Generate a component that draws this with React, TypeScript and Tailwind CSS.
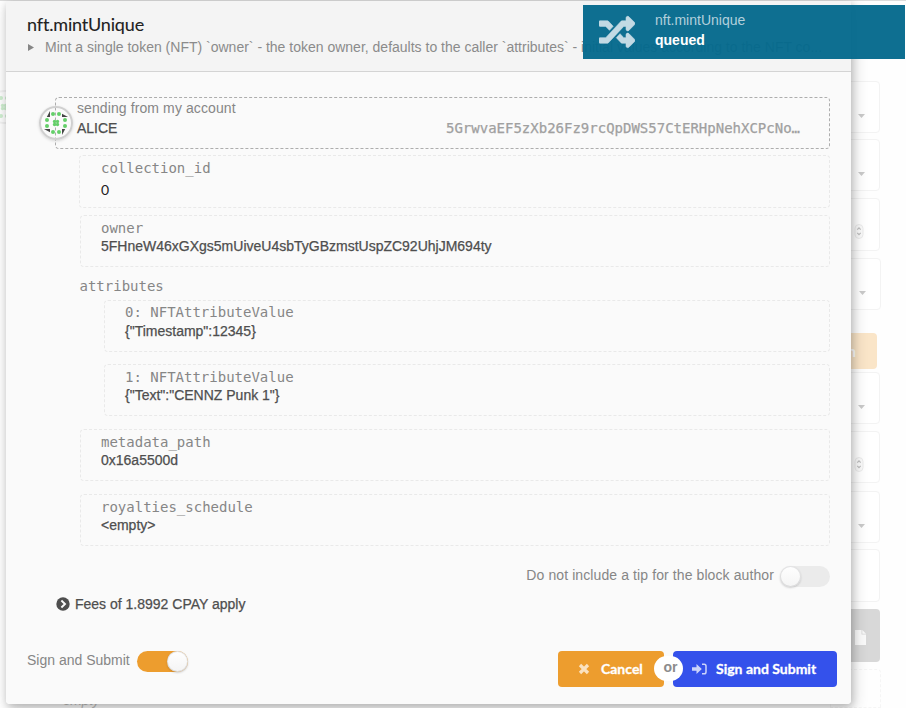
import React from 'react';

const sans = "font-['Liberation_Sans',Arial,sans-serif]";
const mono = "font-['DejaVu_Sans_Mono',monospace]";

function Param({ label, value, box, valueClass }: { label: string; value: string; box: string; valueClass: string }) {
  return (
    <div className={`rounded-[4px] border border-dashed border-[#e9e9e9] pl-[20px] ${box}`}>
      <div className={`h-[18px] text-[14px] leading-[18px] whitespace-pre text-[#868686] ${mono}`}>{label}</div>
      <div className={`h-[18px] w-max text-[14px] leading-[18px] whitespace-pre [-webkit-text-stroke:0.25px_#4e4e4e] text-[#4e4e4e] ${valueClass}`}>{value}</div>
    </div>
  );
}

function Field({ size, kind }: { size: string; kind: 'select' | 'stepper' | 'empty' }) {
  return (
    <div className={`rounded-[4px] border border-[#f3f3f3] bg-white flex justify-end ${size}`}>
      {kind === 'select' && (
        <svg className="mt-[32px] mr-[14px] h-[4px] w-[7px]" viewBox="0 0 7 4"><path d="M0 0h7L3.5 4z" fill="#cacaca" /></svg>
      )}
      {kind === 'stepper' && (
        <svg className="mt-[24px] mr-[15px] h-[16px] w-[10px]" viewBox="0 0 10 16">
          <rect x="1" y="1.5" width="8" height="14" rx="4" fill="#fafafa" stroke="#ececec" />
          <path d="M3.3 6.7L5 4.8l1.7 1.9M3.3 9.8L5 11.7l1.7-1.9" fill="none" stroke="#bdbdbd" strokeWidth="1.1" />
        </svg>
      )}
    </div>
  );
}

function Identicon() {
  const dots = [[-3, -9], [3, -9], [9, -3], [9, 3], [3, 9], [-3, 9], [-9, 3], [-9, -3], [-1.5, -1.5], [1.5, -1.5], [1.5, 1.5], [-1.5, 1.5]];
  return (
    <svg className="h-full w-full" viewBox="-15 -15 30 30">
      {[0, 90, 180, 270].map((a) => (
        <path key={a} d="M-6 -12v6h-3.2z" fill="#454545" transform={`rotate(${a})`} />
      ))}
      {dots.map(([x, y], i) => (
        <circle key={i} cx={x} cy={y} r={i > 7 ? 1.65 : 2} fill="#64cf69" />
      ))}
    </svg>
  );
}

function BackgroundPage() {
  return (
    <div className="flex h-full justify-between border-t border-[#dcdcdc] bg-[#fefefe]">
      <div className="flex w-[6px] flex-col overflow-hidden pt-[89px]">
        <div className="ml-[-13px] h-[34px] w-[34px] shrink-0 rounded-full border-2 border-[#d8d8d8] opacity-30"><Identicon /></div>
      </div>
      <div className={`mt-[691px] mr-auto ml-[49px] h-[16px] overflow-hidden text-[14px] leading-[16px] tracking-[-0.3px] text-[#c2c2c2] italic ${sans}`}>&lt;empty&gt;</div>
      <div className="flex w-[76px] flex-col pt-[80px]">
        <Field kind="select" size="h-[52px] w-[50px]" />
        <Field kind="select" size="mt-[6px] h-[52px] w-[50px]" />
        <Field kind="stepper" size="mt-[7px] h-[53px] w-[50px]" />
        <Field kind="select" size="mt-[7px] h-[52px] w-[51px]" />
        <div className="mt-[23px] h-[36px] w-[47px] rounded-[4px] bg-[#fae5c8] pl-[17px] font-[Lato,sans-serif] text-[16px] leading-[36px] font-bold text-white">n</div>
        <Field kind="select" size="mt-[3px] h-[52px] w-[50px]" />
        <Field kind="stepper" size="mt-[7px] h-[53px] w-[50px]" />
        <Field kind="select" size="mt-[8px] h-[52px] w-[50px]" />
        <Field kind="empty" size="mt-[6px] h-[53px] w-[50px]" />
        <div className="mt-[7px] flex h-[53px] w-[50px] items-center justify-end rounded-[4px] bg-[#d8d8d8] pr-[14px]">
          <svg className="mt-[3px] h-[15px] w-[11px]" viewBox="0 0 11 15"><path d="M0 0h6.5v4.5H11V15H0z" fill="#fafafa" /><path d="M7.3 0L11 3.7H7.3z" fill="#fafafa" /></svg>
        </div>
        <div className="mt-[7px] h-[39px] w-[51px] rounded-t-[4px] border border-dashed border-[#f5f5f5]" />
      </div>
    </div>
  );
}

function Dialog() {
  return (
    <div className="absolute top-[1px] left-[6px] flex h-[703px] w-[845px] flex-col overflow-hidden rounded-b-[4px] bg-[#fafafa]">
      <header className="h-[71px] shrink-0 border-b border-[#d4d4d4] bg-[#f4f4f4] pl-[21px]">
        <h1 className="mt-[12px] h-[23px] w-max font-[Lato,sans-serif] text-[18px] leading-[23px] tracking-[-0.16px] [-webkit-text-stroke:0.1px_#212121] text-[#212121]">nft.mintUnique</h1>
        <div className="flex h-[22px] items-center">
          <svg className="ml-px h-[7px] w-[7px]" viewBox="0 0 7 7"><path d="M0 0l6 3.5L0 7z" fill="#868686" /></svg>
          <p className={`ml-[10px] w-max text-[14px] leading-[20px] whitespace-pre text-[#8b8b8b] ${sans}`}>Mint a single token (NFT) `owner` - the token owner, defaults to the caller `attributes` - initial values according to the NFT co...</p>
        </div>
      </header>

      <main className="flex flex-col pr-[21px]">
        <section className="relative mt-[25px] ml-[49px] h-[52px] rounded-[4px] border border-dashed border-[#adadad] pl-[21px]">
          <div className="absolute top-[8px] left-[-17px] h-[34px] w-[34px] rounded-full border-2 border-[#d0d0d0] shadow-[0_1px_3px_rgba(0,0,0,0.15)]">
            <Identicon />
          </div>
          <div className={`h-[20px] w-max text-[14px] leading-[20px] tracking-[0.1px] text-[#868686] ${sans}`}>sending from my account</div>
          <div className="flex h-[20px] items-center justify-between pr-[29px]">
            <span className={`text-[14px] [-webkit-text-stroke:0.25px_#4e4e4e] text-[#4e4e4e] ${sans}`}>ALICE</span>
            <span className={`text-[14px] [-webkit-text-stroke:0.25px_#a0a0a0] text-[#a0a0a0] ${mono}`}>5GrwvaEF5zXb26Fz9rcQpDWS57CtERHpNehXCPcNo…</span>
          </div>
        </section>
        <section className="mt-[6px] ml-[73px] h-[53px] rounded-[4px] border border-dashed border-[#e9e9e9] pt-[2px] pl-[21px]">
          <div className={`h-[20px] text-[14px] leading-[20px] text-[#868686] ${mono}`}>collection_id</div>
          <div className="mt-[2px] h-[20px] font-[Lato,sans-serif] text-[14px] leading-[20px] text-[#212121]">0</div>
        </section>
        <Param box="mt-[7px] ml-[74px] h-[52px] pt-[3px]" label="owner" value="5FHneW46xGXgs5mUiveU4sbTyGBzmstUspZC92UhjJM694ty" valueClass={sans} />
        <div className={`mt-[10px] ml-[73.5px] h-[18px] text-[14px] leading-[18px] text-[#868686] ${mono}`}>attributes</div>
        <Param box="mt-[5px] ml-[98px] h-[52px] pt-[2px]" label="0: NFTAttributeValue" value={'{"Timestamp":12345}'} valueClass={`pt-px ${sans}`} />
        <Param box="mt-[12px] ml-[98px] h-[52px] pt-[3px]" label="1: NFTAttributeValue" value={'{"Text":"CENNZ Punk 1"}'} valueClass={sans} />
        <Param box="mt-[13px] ml-[74px] h-[52px] pt-[3px]" label="metadata_path" value="0x16a5500d" valueClass={sans} />
        <Param box="mt-[13px] ml-[74px] h-[52px] pt-[3px]" label="royalties_schedule" value="<empty>" valueClass={sans} />

        <div className="mt-[20px] flex h-[21px] justify-end gap-[6px]">
          <span className={`mt-[-1px] h-[20px] text-[14px] leading-[20px] tracking-[0.1px] text-[#868686] ${sans}`}>Do not include a tip for the block author</span>
          <div className="h-[21px] w-[50px] rounded-full bg-[#ebebeb]"><div className="h-[21px] w-[21px] rounded-full bg-gradient-to-b from-white to-[#f4f4f4] shadow-[0_1px_2px_rgba(34,36,38,0.2),0_0_0_1px_rgba(34,36,38,0.12)_inset]" /></div>
        </div>
        <div className="mt-[7px] ml-[50px] flex h-[20px] items-center gap-[5px]">
          <svg className="h-[14px] w-[14px]" viewBox="0 0 14 14"><circle cx="7" cy="7" r="6.7" fill="#4e4e4e" /><path d="M5.4 3.5L9 7l-3.6 3.5" fill="none" stroke="#fafafa" strokeWidth="1.9" /></svg>
          <span className={`text-[14px] leading-[20px] [-webkit-text-stroke:0.25px_#4e4e4e] text-[#4e4e4e] ${sans}`}>Fees of 1.8992 CPAY apply</span>
        </div>
      </main>

      <footer className="mt-[37px] flex h-[36px] pr-[14px] pl-[21px]">
        <span className={`mt-[-1px] h-[20px] text-[14px] leading-[20px] text-[#868686] ${sans}`}>Sign and Submit</span>
        <div className="ml-[7px] flex h-[21px] w-[51px] justify-end rounded-full bg-[#ed9d2e]"><div className="h-[21px] w-[21px] rounded-full bg-gradient-to-b from-white to-[#f4f4f4] shadow-[0_1px_2px_rgba(34,36,38,0.2),0_0_0_1px_rgba(34,36,38,0.12)_inset]" /></div>
        <div className="relative ml-auto flex gap-[9px] font-[Lato,sans-serif] text-[14px] leading-[36px] font-bold text-white">
          <button className="flex h-[36px] w-[106px] items-center rounded-[4px] bg-[#ed9d2e] pl-[20px] [-webkit-text-stroke:0.3px_#ffffff]">
            <svg className="h-[12px] w-[12px]" viewBox="0 0 12 12"><path d="M2 2l8 8M10 2l-8 8" fill="none" stroke="#fbe2c0" strokeWidth="3.2" /></svg>
            <span className="ml-[11px]">Cancel</span>
          </button>
          <button className="flex h-[36px] w-[164px] items-center rounded-[4px] bg-[#3451eb] pl-[19px] [-webkit-text-stroke:0.3px_#ffffff]">
            <svg className="h-[12px] w-[15px]" viewBox="0 0 15 12"><path d="M0 4.2h4.5V1L9.8 6 4.5 11V7.8H0z" fill="#ccd4fa" /><path d="M10 1.2h2.2q1.8 0 1.8 1.8v6q0 1.8-1.8 1.8H10" fill="none" stroke="#ccd4fa" strokeWidth="1.5" /></svg>
            <span className="ml-[9px]">Sign and Submit</span>
          </button>
          <div className={`absolute top-[5px] left-[96px] h-[25px] w-[29px] rounded-full bg-white pl-[4px] text-center text-[14px] leading-[23px] text-[#8c8c8c] ${sans}`}>or</div>
        </div>
      </footer>
    </div>
  );
}

function Notification() {
  return (
    <div className={`absolute top-[5px] left-[583px] flex h-[54px] w-[322px] bg-[#04698c]/96 ${sans}`}>
      <svg className="mt-[9px] ml-[16px] h-[36px] w-[36px]" viewBox="0 0 512 512">
        <path fill="#c2dae4" stroke="#c2dae4" strokeWidth="8" d="M504.971 359.029c9.373 9.373 9.373 24.569 0 33.941l-80 79.984c-15.01 15.01-40.971 4.49-40.971-16.971V416h-58.785a12.004 12.004 0 0 1-8.773-3.812l-70.556-75.596 53.333-57.143L352 336h32v-39.981c0-21.438 25.943-31.998 40.971-16.971l80 79.981zM12 176h84l52.781 56.551 53.333-57.143-70.556-75.596A11.999 11.999 0 0 0 122.785 96H12c-6.627 0-12 5.373-12 12v56c0 6.627 5.373 12 12 12zm372 0v39.984c0 21.46 25.961 31.98 40.971 16.971l80-79.984c9.373-9.373 9.373-24.569 0-33.941l-80-79.981C409.943 24.021 384 34.582 384 56.019V96h-58.785a12.004 12.004 0 0 0-8.773 3.812L96 336H12c-6.627 0-12 5.373-12 12v56c0 6.627 5.373 12 12 12h110.785c3.326 0 6.503-1.381 8.773-3.812L352 176h32z" />
      </svg>
      <div className="ml-[20px] pt-[5px] text-[14px] leading-[20px]">
        <div className="text-[#b2d0dc]">nft.mintUnique</div>
        <div className="font-bold text-white">queued</div>
      </div>
    </div>
  );
}

export default function App() {
  return (
    <div className="relative h-[708px] w-[906px] overflow-hidden bg-white">
      <BackgroundPage />
      <div className="absolute top-[1px] left-[6px] h-[703px] w-[845px] rounded-b-[4px] shadow-[1px_3px_8px_rgba(0,0,0,0.2),3px_5px_15px_rgba(0,0,0,0.16)]" />
      <Dialog />
      <Notification />
    </div>
  );
}
